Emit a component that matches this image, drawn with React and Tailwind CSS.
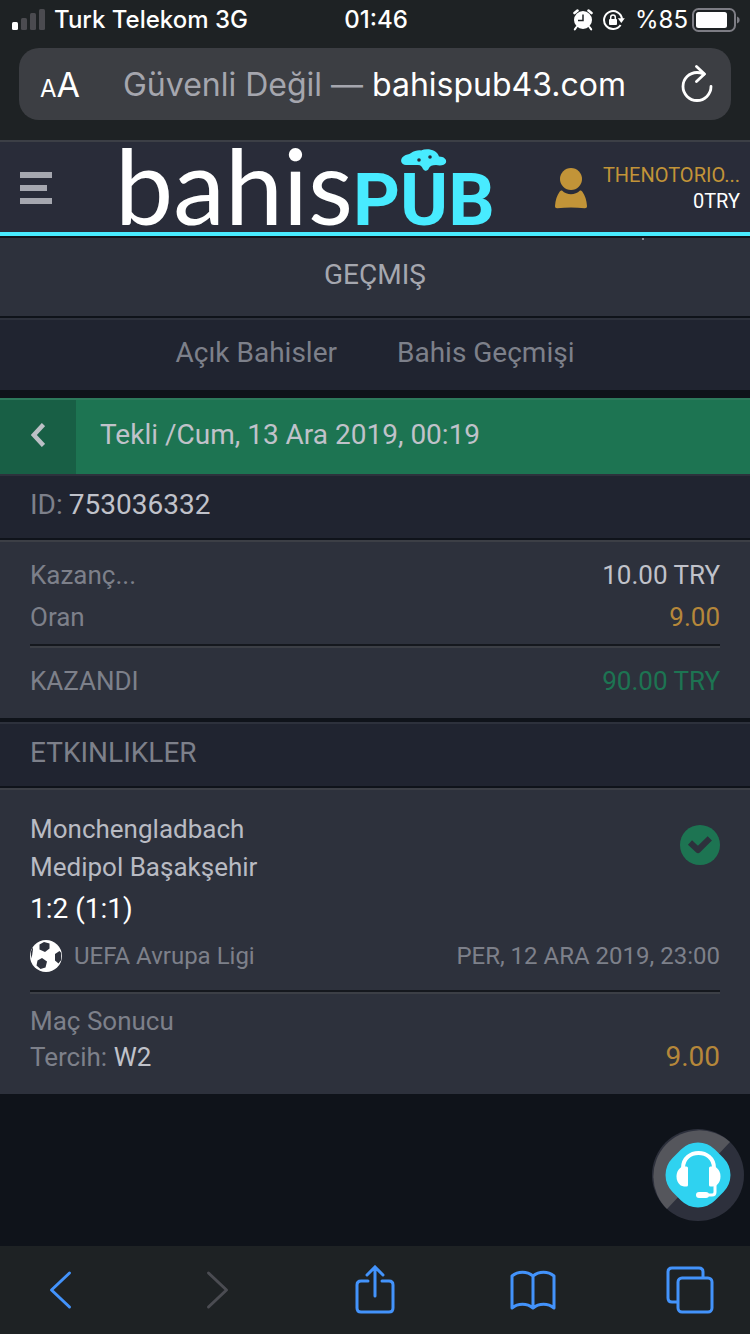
const INFO_ROWS = [
  { label: "Kazanç...", value: "10.00 TRY", color: "text-[#c0c2ca]" },
  { label: "Oran", value: "9.00", color: "text-[#b5873a]" },
];

function SignalIcon() {
  return (
    <svg width="34" height="22" viewBox="0 0 34 22" aria-hidden="true">
      <rect x="0" y="13" width="6" height="8" rx="1.5" fill="#fff" />
      <rect x="9" y="9" width="6" height="12" rx="1.5" fill="#4b4b50" />
      <rect x="18" y="4" width="6" height="17" rx="1.5" fill="#4b4b50" />
      <rect x="27" y="0" width="6" height="21" rx="1.5" fill="#4b4b50" />
    </svg>
  );
}

function AlarmIcon() {
  return (
    <svg width="20" height="22" viewBox="0 0 20 22" aria-hidden="true">
      <circle cx="10" cy="11" r="9" fill="#fff" />
      <path d="M1.5 4 4.5 1.6M18.5 4 15.5 1.6" stroke="#fff" strokeWidth="2.6" strokeLinecap="round" />
      <path d="M3.5 18 1.8 20.4M16.5 18l1.7 2.4" stroke="#fff" strokeWidth="2" strokeLinecap="round" />
      <path d="M10 5.5V11.5H5" fill="none" stroke="#1e2224" strokeWidth="1.5" />
    </svg>
  );
}

function RotationLockIcon() {
  return (
    <svg width="22" height="22" viewBox="0 0 22 22" aria-hidden="true">
      <path d="M17.6 16A9 9 0 1 1 19 10" fill="none" stroke="#fff" strokeWidth="2" />
      <path d="M14.8 9.2h7L18.3 14z" fill="#fff" />
      <rect x="6" y="10" width="8" height="6" rx="1" fill="#fff" />
      <path d="M7.7 10.5V8.2a2.3 2.3 0 0 1 4.6 0v2.3" fill="none" stroke="#fff" strokeWidth="1.5" />
    </svg>
  );
}

function BatteryIcon() {
  return (
    <svg width="48" height="24" viewBox="0 0 48 24" aria-hidden="true">
      <rect x="1" y="1" width="42" height="22" rx="5.5" fill="none" stroke="#7d7d84" strokeWidth="2" />
      <rect x="4" y="4" width="31" height="16" rx="2.5" fill="#fff" />
      <path d="M45 8.5c2 .8 2.6 2 2.6 3.5s-.6 2.7-2.6 3.5z" fill="#7d7d84" />
    </svg>
  );
}

function StatusBar() {
  return (
    <div className="grid h-10 grid-cols-[1fr_auto_1fr] items-center pr-2.5 pl-3 font-['Inter',sans-serif] text-[24px] font-medium text-white">
      <div className="flex items-center gap-2">
        <SignalIcon />
        <span className="whitespace-nowrap">Turk Telekom 3G</span>
      </div>
      <span>01:46</span>
      <div className="flex items-center justify-end gap-2.5">
        <AlarmIcon />
        <RotationLockIcon />
        <div className="flex items-center gap-1">
          <span className="font-normal">%85</span>
          <BatteryIcon />
        </div>
      </div>
    </div>
  );
}

function AddressBar() {
  return (
    <div className="px-[19px] pt-2 pb-5">
      <div className="flex h-18 items-center justify-between rounded-[20px] bg-[#3c3e43] pr-[18px] pl-[21px] font-['Inter',sans-serif] text-white">
        <button type="button" aria-label="Yazı boyutu" className="flex items-baseline">
          <span className="text-[24px]">A</span>
          <span className="text-[34px]">A</span>
        </button>
        <p className="pt-0.5 pr-3 text-[32px] whitespace-nowrap">
          <span className="text-[#a5a6ae]">Güvenli Değil — </span>bahispub43.com
        </p>
        <button type="button" aria-label="Yenile">
          <svg width="32" height="38" viewBox="0 0 32 38" fill="none" stroke="#fff" strokeWidth="2.8" strokeLinecap="round" strokeLinejoin="round">
            <path d="M30 21.5A14 14 0 1 1 16 7.500c3 0 5 .8 7 1.500" />
            <path d="M15.5 1.5 23.5 9 15.5 16.5" />
          </svg>
        </button>
      </div>
    </div>
  );
}

function Logo() {
  return (
    <a href="#" aria-label="bahisPUB" className="block">
      <svg width="380" height="84" viewBox="0 0 380 84" className="overflow-visible" aria-hidden="true">
        <text x="2" y="79" fontFamily="Lato, sans-serif" fontSize="104" fill="#fff">
          bahis
        </text>
        <text x="240" y="79" fontFamily="Roboto, sans-serif" fontSize="73" fontWeight="700" fill="#48ebff">
          PUB
        </text>
        <path
          transform="translate(12 2)"
          fill="#48ebff"
          d="M281 17c-5 0-7-6-2-9 2-1.5 5-1.5 7-3 3-2 7-3 10-2.5 6-2.5 16-1 18 6 5 0 8 3 7 6-1 3-6 3.5-10 2.5-4 0-6 1-7 3-1 3-4 4-6 1-1-2-2-4-5-4-4 0-8 .2-12 0z"
        />
        <circle cx="306" cy="14" r="1.8" fill="#292c39" />
        <circle cx="317" cy="11" r="1.8" fill="#292c39" />
      </svg>
    </a>
  );
}

function UserIcon() {
  return (
    <svg width="32" height="41" viewBox="0 0 32 41" fill="#c29438" aria-hidden="true">
      <circle cx="16" cy="11" r="11" />
      <path d="M7 22.5c5 5 13 5 18 0 1 0 1.8.5 2.4 1.3C30 27.5 31.6 32 32 38c0 1.5-.8 2.3-2.3 2.2-9-1-18.4-1-27.4 0C.8 40.3 0 39.5 0 38c.4-6 2-10.5 4.6-14.2.6-.8 1.4-1.3 2.4-1.3z" />
    </svg>
  );
}

function SiteHeader() {
  return (
    <header className="flex h-24 items-center justify-between border-t-2 border-b-4 border-t-[#3c3f46] border-b-[#48ebff] bg-[#292c39] pt-0.5 pr-2.5 pl-5">
      <button type="button" aria-label="Menü" className="flex flex-col gap-[7px]">
        <span className="h-1.5 w-8 bg-[#a5a7af]" />
        <span className="h-1.5 w-[27px] bg-[#a5a7af]" />
        <span className="h-1.5 w-8 bg-[#a5a7af]" />
      </button>
      <Logo />
      <a href="#" className="flex items-center gap-4">
        <UserIcon />
        <span className="flex flex-col text-right text-[20px] leading-[26px]">
          <span className="text-[#c29438]">THENOTORIO...</span>
          <span className="text-white">0TRY</span>
        </span>
      </a>
    </header>
  );
}

function SectionTitle({ children, className = "" }) {
  return (
    <div className={`h-[66px] border-t-2 border-b-2 border-t-[#2d313c] border-b-[#0f131a] bg-[#202430] px-[30px] ${className}`}>
      {children}
    </div>
  );
}

function Divider() {
  return <hr className="h-1 border-t-2 border-b-2 border-t-[#15181e] border-b-[#3c3f46]" />;
}

function BallIcon() {
  return (
    <svg width="32" height="32" viewBox="0 0 32 32" aria-hidden="true">
      <circle cx="16" cy="16" r="16" fill="#fff" />
      <g fill="#2d313c">
        <path d="M9.5 4.5 14 2 19.5 3.5 19.5 8.5 15 12 9.5 9.5z" />
        <path d="M25 14 29.5 11 31.2 13v7l-2.7 3.5L25 20.5z" />
        <path d="M7.5 20.5 12 18 17 21.5 15.5 27.5 10.5 29 6.5 25.5z" />
        <path d="M.8 12 2.5 7.5 3 9 2.2 15 1 18.5z" />
      </g>
    </svg>
  );
}

function CheckBadge() {
  return (
    <svg width="40" height="40" viewBox="0 0 40 40" role="img" aria-label="Kazandı">
      <circle cx="20" cy="20" r="20" fill="#1d7452" />
      <path d="M10 17.5 18 25 29.8 13.3" fill="none" stroke="#2d313c" strokeWidth="6" strokeLinejoin="round" />
    </svg>
  );
}

function BetSummary() {
  return (
    <section className="border-t-2 border-[#3c3f46] bg-[#2d313c] px-[30px] text-[26px]">
      <dl className="pt-3 pb-1.5">
        {INFO_ROWS.map((row) => (
          <div key={row.label} className="flex h-[42px] items-center justify-between">
            <dt className="text-[#7d808a]">{row.label}</dt>
            <dd className={row.color}>{row.value}</dd>
          </div>
        ))}
      </dl>
      <Divider />
      <div className="flex h-[70px] items-center justify-between pb-1">
        <span className="text-[#7d808a]">KAZANDI</span>
        <span className="text-[#1d7452]">90.00 TRY</span>
      </div>
    </section>
  );
}

function EventCard() {
  return (
    <section className="border-t-2 border-[#3c3f46] bg-[#2d313c] px-[30px] pb-[19px]">
      <div className="flex items-start justify-between pt-5">
        <div className="text-[26px] leading-[38px] text-[#b9bbc3]">
          <p>Monchengladbach</p>
          <p>Medipol Başakşehir</p>
          <p className="text-[28px] leading-[46px] text-white">1:2 (1:1)</p>
        </div>
        <div className="pt-[15px]">
          <CheckBadge />
        </div>
      </div>
      <div className="mt-2 mb-[18px] flex h-8 items-center justify-between text-[24px] text-[#7d808a]">
        <span className="flex items-center gap-3">
          <BallIcon />
          UEFA Avrupa Ligi
        </span>
        <span>PER, 12 ARA 2019, 23:00</span>
      </div>
      <Divider />
      <div className="flex items-end justify-between pt-[9px] text-[26px] leading-9 text-[#7d808a]">
        <div>
          <p>Maç Sonucu</p>
          <p>
            Tercih: <span className="text-[#c0c2ca]">W2</span>
          </p>
        </div>
        <span className="text-[28px] text-[#b5873a]">9.00</span>
      </div>
    </section>
  );
}

function SupportButton() {
  return (
    <button type="button" aria-label="Canlı destek" className="absolute right-1.5 bottom-6">
      <svg width="92" height="94" viewBox="0 0 92 94">
        <circle cx="46" cy="47" r="46" fill="#2d303c" />
        <path d="M78 14A46 46 0 0 0 15 81z" fill="#55565c" />
        <rect x="16" y="17" width="60" height="60" rx="24" fill="#2fd2f0" transform="rotate(45 46 47)" />
        <g fill="none" stroke="#fff">
          <path d="M31 40c0-20 31-20 31 0" strokeWidth="4" />
          <path d="M63 54v10c0 2-1 3-3 3h-7" strokeWidth="3" />
        </g>
        <g fill="#fff">
          <path d="M36 40v17q0 1.5-1.5 1.5H32c-10-1-10-19 0-20h2.5q1.5 0 1.5 1.5z" />
          <path d="M57 40v17q0 1.5 1.5 1.5H61c10-1 10-19 0-20h-2.5q-1.5 0-1.5 1.5z" />
          <rect x="44" y="64" width="13" height="6" rx="3" />
        </g>
      </svg>
    </button>
  );
}

function ToolbarButton({ label, disabled = false, children }) {
  return (
    <button type="button" aria-label={label} disabled={disabled} className="flex w-12 justify-center">
      {children}
    </button>
  );
}

function BrowserToolbar() {
  return (
    <nav className="flex h-[88px] items-center justify-between bg-[#1e2224] px-9">
      <ToolbarButton label="Geri">
        <svg width="26" height="40" viewBox="0 0 26 40" fill="none" stroke="#4393fb" strokeWidth="3" strokeLinecap="round" strokeLinejoin="round">
          <path d="M22.5 3 4.500 20l18 17" />
        </svg>
      </ToolbarButton>
      <ToolbarButton label="İleri" disabled>
        <svg width="26" height="40" viewBox="0 0 26 40" fill="none" stroke="#4b4c52" strokeWidth="3" strokeLinecap="round" strokeLinejoin="round">
          <path d="M3.5 3l18 17-18 17" />
        </svg>
      </ToolbarButton>
      <ToolbarButton label="Paylaş">
        <svg width="40" height="50" viewBox="0 0 40 50" fill="none" stroke="#4393fb" strokeWidth="3" strokeLinecap="round">
          <path d="M13 16H6q-4 0-4 4v23q0 4 4 4h28q4 0 4-4V20q0-4-4-4h-7" />
          <path d="M20 31V3M12 10l8-8 8 8" />
        </svg>
      </ToolbarButton>
      <ToolbarButton label="Yer imleri">
        <svg width="46" height="40" viewBox="0 0 46 40" fill="none" stroke="#4393fb" strokeWidth="3" strokeLinejoin="round">
          <path d="M23 6C17 1 8 1 2 6v32c6-5 15-5 21 0 6-5 15-5 21 0V6c-6-5-15-5-21 0zM23 6v32" />
        </svg>
      </ToolbarButton>
      <ToolbarButton label="Sekmeler">
        <svg width="48" height="48" viewBox="0 0 48 48" fill="none" stroke="#4393fb" strokeWidth="3">
          <path d="M11 36H6q-4 0-4-4V6q0-4 4-4h27q4 0 4 4v5" />
          <rect x="12" y="12" width="34" height="34" rx="4" />
        </svg>
      </ToolbarButton>
    </nav>
  );
}

export default function App() {
  return (
    <div className="flex min-h-screen flex-col bg-[#0f131a] font-['Roboto',sans-serif]">
      <div className="bg-[#1e2224]">
        <StatusBar />
        <AddressBar />
      </div>
      <SiteHeader />
      <main className="relative mt-0.5 flex-1">
        <span className="absolute top-0 left-[642px] size-0.5 bg-[#8b8d95]" />
        <h1 className="flex h-[78px] items-center justify-center bg-[#2d313c] pb-1 text-[28px] text-[#a5a7af]">GEÇMIŞ</h1>
        <nav className="mt-0.5 flex h-18 items-center justify-center gap-[60px] border-t-2 border-[#2d313c] bg-[#202430] pb-1 text-[28px] text-[#7d808a]">
          <a href="#">Açık Bahisler</a>
          <a href="#">Bahis Geçmişi</a>
        </nav>
        <div className="mt-2 flex h-[76px] border-t-2 border-[#2d7a5c] bg-[#1d7452]">
          <button type="button" aria-label="Geri" className="flex w-[76px] items-center justify-center bg-[#185f45] pb-1">
            <svg width="14" height="24" viewBox="0 0 14 24" fill="none" stroke="#bcc0c6" strokeWidth="4.5">
              <path d="M12.5 1.5 2.8 12l9.7 10.5" />
            </svg>
          </button>
          <h2 className="flex items-center px-6 pb-1 text-[28px] text-[#c0c2ca]">Tekli /Cum, 13 Ara 2019, 00:19</h2>
        </div>
        <SectionTitle className="flex items-center gap-1.5 pb-1 text-[28px]">
          <span className="text-[#7d808a]">ID:</span>
          <span className="text-[#c0c2ca]">753036332</span>
        </SectionTitle>
        <BetSummary />
        <SectionTitle className="mt-1 flex items-center pb-1 text-[28px] text-[#7d808a]">ETKINLIKLER</SectionTitle>
        <EventCard />
        <SupportButton />
      </main>
      <BrowserToolbar />
    </div>
  );
}
